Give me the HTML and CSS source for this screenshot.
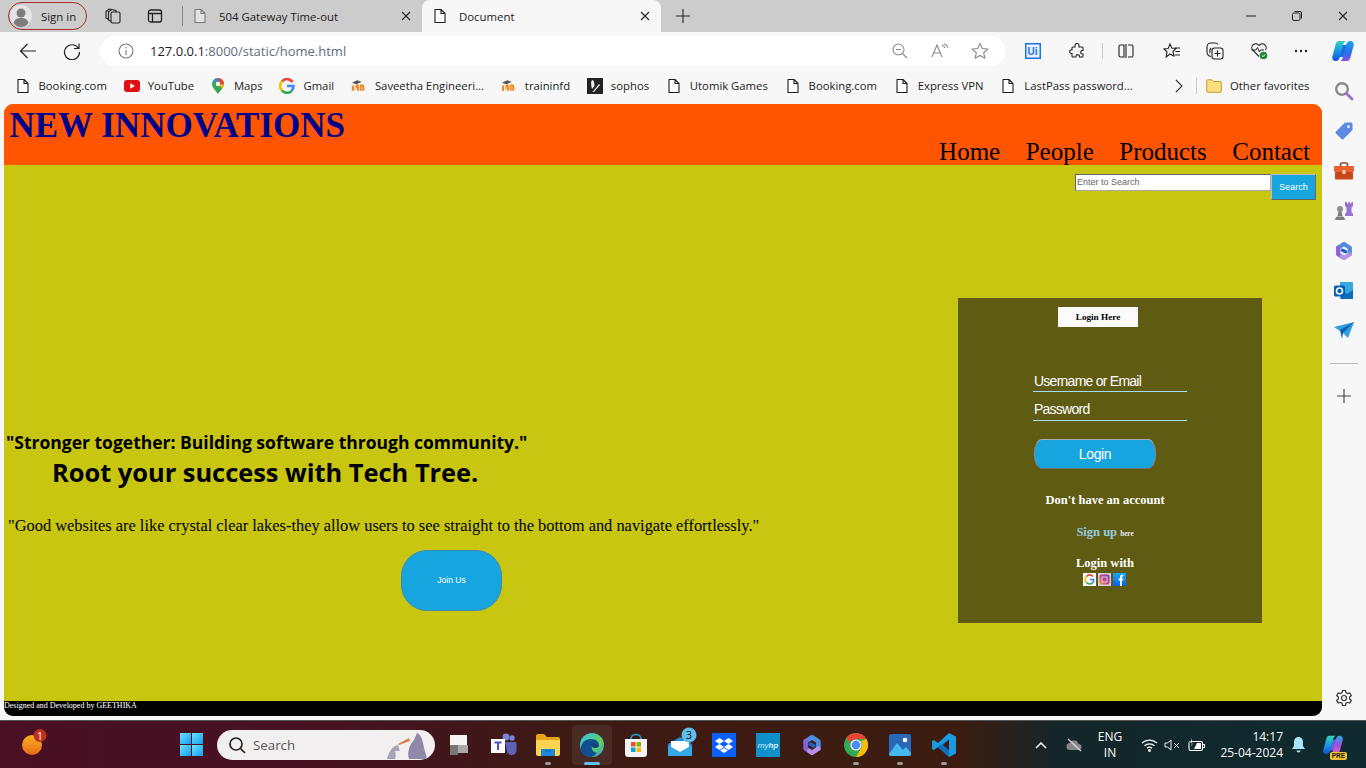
FILE: index.html

```html
<!DOCTYPE html>
<html lang="en">
<head>
    <meta charset="UTF-8" />
    <meta name="viewport" content="width=device-width, initial-scale=1" />
    <title>Document</title>
    <link rel="stylesheet" href="styles.css">
</head>
<body>
    <svg class="sprite" aria-hidden="true">
        <defs>
            <linearGradient id="gCopilot" x1="0" y1="0" x2="0" y2="1"><stop offset="0" stop-color="#2fd8b8"/><stop offset=".55" stop-color="#1a8fe8"/><stop offset="1" stop-color="#1450d8"/></linearGradient>
            <linearGradient id="gCopilot2" x1="0" y1="0" x2="0" y2="1"><stop offset="0" stop-color="#1aa0f0"/><stop offset=".6" stop-color="#2a70e8"/><stop offset="1" stop-color="#8a50e0"/></linearGradient>
            <linearGradient id="gCopilot3" x1="0" y1="0" x2="0" y2="1"><stop offset="0" stop-color="#2aa8f0"/><stop offset=".5" stop-color="#a050e0"/><stop offset="1" stop-color="#f060b0"/></linearGradient>
            <linearGradient id="gWin" x1="0" y1="0" x2="1" y2="1"><stop offset="0" stop-color="#6fe3ff"/><stop offset="1" stop-color="#0f9cf5"/></linearGradient>
            <linearGradient id="gSun" x1="0" y1="0" x2="0" y2="1"><stop offset="0" stop-color="#f5b21e"/><stop offset="1" stop-color="#ee6a1a"/></linearGradient>
            <linearGradient id="gEdge" x1="0" y1="0" x2="1" y2="1"><stop offset="0" stop-color="#35c1f1"/><stop offset=".6" stop-color="#5fd060"/><stop offset="1" stop-color="#2f9de0"/></linearGradient>
            <linearGradient id="gInsta" x1="0" y1="1" x2="1" y2="0"><stop offset="0" stop-color="#e8a040"/><stop offset=".5" stop-color="#c04090"/><stop offset="1" stop-color="#7040b0"/></linearGradient>
            <linearGradient id="gFb" x1="0" y1="0" x2="0" y2="1"><stop offset="0" stop-color="#18a8f8"/><stop offset="1" stop-color="#0a60e8"/></linearGradient>
        </defs>
        <symbol id="i-page" viewBox="0 0 16 16"><path d="M3 1.500h6l4 4v9H3zM9 1.500v4h4" fill="#fff" stroke="#1c1c1c" stroke-width="1.100" stroke-linejoin="round"/></symbol>
        <symbol id="i-close" viewBox="0 0 12 12"><path d="M2 2l8 8M10 2l-8 8" stroke="#222" stroke-width="1.100" fill="none"/></symbol>
        <symbol id="i-copilot" viewBox="0 0 24 24"><path d="M11 6h5l-3 12H8z" fill="#1a6fe0"/><path d="M8 2h7c-1.500.5-2.500 2-3 4L9 18c-.5 2-2 4-4 4-2.500 0-4.500-2-3.500-5L4.500 6C5.200 3.500 6 2 8 2z" fill="url(#gCopilot)"/><path d="M16 22H9c1.500-.5 2.500-2 3-4l3-12c.5-2 2-4 4-4 2.500 0 4.500 2 3.500 5l-3 11c-.7 2.500-1.500 4-3.500 4z" fill="url(#gCopilot2)"/></symbol>
        <symbol id="i-copilot-pre" viewBox="0 0 24 24"><path d="M11 6h5l-3 12H8z" fill="#5a60e0"/><path d="M8 2h7c-1.500.5-2.500 2-3 4L9 18c-.5 2-2 4-4 4-2.500 0-4.500-2-3.500-5L4.500 6C5.200 3.500 6 2 8 2z" fill="url(#gCopilot)"/><path d="M16 22H9c1.500-.5 2.500-2 3-4l3-12c.5-2 2-4 4-4 2.500 0 4.500 2 3.500 5l-3 11c-.7 2.500-1.500 4-3.500 4z" fill="url(#gCopilot3)"/></symbol>
        <symbol id="i-m365" viewBox="0 0 24 24"><g fill="none" stroke-width="5" stroke-linejoin="round" stroke-linecap="round"><path d="M5 8l7-4.500 7 4.500v8" stroke="#4f8ce0"/><path d="M5 8v8l4 2.500" stroke="#8a60d8"/><path d="M9 18.500l3 2 7-4.500" stroke="#b890e8"/><path d="M10 11l4 2" stroke="#1f5fc8" stroke-width="4"/></g></symbol>
        <symbol id="i-moodle" viewBox="0 0 18 14"><path d="M1 4l6-3 5 2-6 2.500z" fill="#555"/><path d="M1 13V7h2.500v6zM5 13V7.500C5 6 6 5.500 7 5.500S9 6 9 7.500V13H6.800V8H7zM9.800 13V7.500c0-1.500 1-2 2.200-2 1.500 0 3 .5 3 2.500v5h-2.400V8H12v5z" fill="#f08a24"/></symbol>
    </svg>

    <header class="tabstrip">
        <div class="signin">
            <svg width="22" height="22" viewBox="0 0 22 22"><circle cx="11" cy="11" r="11" fill="#e4e4e4"/><circle cx="11" cy="8" r="4.500" fill="#7d7d7d"/><path d="M3.500 18c1-4 4-5 7.500-5s6.500 1 7.500 5c-2 2.500-4.500 4-7.500 4s-5.500-1.500-7.500-4z" fill="#7d7d7d"/></svg>
            <span>Sign in</span>
        </div>
        <svg class="strip-workspaces" width="18" height="18" viewBox="0 0 18 18" fill="none" stroke="#222" stroke-width="1.100"><rect x="7" y="5" width="9" height="11" rx="1.500"/><path d="M7 14.500L4.500 13V4.500L8 2.500l4 1V5M4.500 12.500L2 11V4.500L5 2l3 .5"/></svg>
        <svg class="strip-tabs" width="16" height="16" viewBox="0 0 16 16" fill="none" stroke="#222" stroke-width="1.300"><rect x="1.500" y="2" width="13" height="12" rx="2"/><path d="M1.500 5.500h13M5.500 5.500V14"/></svg>
        <span class="strip-sep"></span>
        <div class="tab">
            <svg width="16" height="16" class="dim"><use href="#i-page"/></svg>
            <span class="tab-title">504 Gateway Time-out</span>
            <svg width="12" height="12"><use href="#i-close"/></svg>
        </div>
        <div class="tab tab-active">
            <svg width="16" height="16"><use href="#i-page"/></svg>
            <span class="tab-title">Document</span>
            <svg width="12" height="12"><use href="#i-close"/></svg>
        </div>
        <svg class="strip-plus" width="16" height="16" viewBox="0 0 16 16"><path d="M8 1v14M1 8h14" stroke="#222" stroke-width="1.100"/></svg>
        <div class="winctl">
            <svg width="12" height="12" viewBox="0 0 12 12"><path d="M1 6h10" stroke="#222"/></svg>
            <svg width="12" height="12" viewBox="0 0 12 12" fill="none" stroke="#222"><rect x="1.500" y="3" width="7.500" height="7.500" rx="1.500"/><path d="M3.500 1.500h5.500a1.500 1.500 0 0 1 1.500 1.500v5.500"/></svg>
            <svg width="12" height="12"><use href="#i-close"/></svg>
        </div>
    </header>

    <nav class="toolbar">
        <svg class="tool-back" width="18" height="18" viewBox="0 0 18 18" fill="none" stroke="#222" stroke-width="1.200"><path d="M17 9H1.500M8.500 2L1.500 9l7 7"/></svg>
        <svg class="tool-reload" width="18" height="18" viewBox="0 0 18 18" fill="none" stroke="#222" stroke-width="1.200"><path d="M15.500 6.500A7.500 7.500 0 1 0 16.500 10M16 1.500v5h-5"/></svg>
        <div class="address">
            <svg width="16" height="16" viewBox="0 0 16 16" fill="none" stroke="#777" stroke-width="1.100"><circle cx="8" cy="8" r="7"/><path d="M8 7v5M8 4v1.500"/></svg>
            <span class="url"><b>127.0.0.1</b>:8000/static/home.html</span>
            <svg class="addr-zoom" width="16" height="16" viewBox="0 0 16 16" fill="none" stroke="#8a8a8a" stroke-width="1.100"><circle cx="6.500" cy="6.500" r="5.500"/><path d="M10.500 10.500L15 15M4 6.500h5"/></svg>
            <svg class="addr-read" width="18" height="16" viewBox="0 0 18 16" fill="none" stroke="#8a8a8a" stroke-width="1.100"><path d="M1 14L6 2l5 12M3 10h6"/><path d="M11 2c1.500.5 2.500 1.500 3 3M13 .8c2 .7 3.500 2 4 4"/></svg>
            <svg class="addr-star" width="18" height="18" viewBox="0 0 18 18" fill="none" stroke="#8a8a8a" stroke-width="1.100"><path d="M9 1.500l2.300 5 5.400.6-4 3.700 1.100 5.400L9 13.500l-4.800 2.700 1.100-5.400-4-3.700 5.400-.6z"/></svg>
        </div>
        <svg class="tool-ui" width="16" height="16" viewBox="0 0 16 16"><rect width="16" height="16" fill="#1a73e8"/><rect x="1.500" y="1.500" width="13" height="13" fill="#e8f1fd"/><text x="2.500" y="12" class="ui-text">Ui</text></svg>
        <svg class="tool-ext" width="16" height="16" viewBox="0 0 16 16" fill="none" stroke="#222" stroke-width="1.100"><path d="M6 2.500a2 2 0 0 1 4 0V4h3c.6 0 1 .4 1 1v2.500h-1a1.800 1.800 0 0 0 0 3.500h1v2c0 .6-.4 1-1 1h-2.500v-1a1.800 1.800 0 0 0-3.500 0v1H4c-.6 0-1-.4-1-1v-2.500H2a1.800 1.800 0 0 1 0-3.500h1V5c0-.6.4-1 1-1h2z"/></svg>
        <span class="tool-sep"></span>
        <svg class="tool-split" width="16" height="14" viewBox="0 0 16 14" fill="none" stroke="#222" stroke-width="1.100"><path d="M6 1H2.500C1.600 1 1 1.600 1 2.500v9c0 .9.600 1.500 1.500 1.500H6zM8 0v14M10 1h3.500c.9 0 1.500.6 1.500 1.500v9c0 .9-.6 1.500-1.500 1.500H10"/></svg>
        <svg class="tool-favs" width="18" height="16" viewBox="0 0 18 16" fill="none" stroke="#222" stroke-width="1.100"><path d="M7 1l1.800 4 4.200.5-3 3 .8 4.500L7 11l-3.800 3 .8-5-3-3 4.200-.5z"/><path d="M12 5h5M12.500 8.500H17M11.500 12H17"/></svg>
        <svg class="tool-coll" width="18" height="18" viewBox="0 0 18 18" fill="none" stroke="#222" stroke-width="1.100"><path d="M5 14.500C2.500 14 1 12.500 1 10V5c0-2.500 1.500-4 4-4h4c1.500 0 2.500.6 3 1.500"/><rect x="6" y="6" width="11" height="11" rx="2.500"/><path d="M11.500 8.500v6M8.500 11.500h6M4 11c-.5-2 0-4 1-5"/></svg>
        <svg class="tool-health" width="18" height="18" viewBox="0 0 18 18"><path d="M9 14.500L2.500 8A3.800 3.800 0 0 1 9 3.500 3.800 3.800 0 0 1 15.500 8" fill="none" stroke="#222" stroke-width="1.100"/><path d="M1.500 8H6l1.500-2.500L9.500 10l1-2H14" fill="none" stroke="#222"/><circle cx="13.500" cy="13.500" r="3.800" fill="#1f8a3c"/><path d="M11.800 13.500l1.200 1.200 2-2.200" stroke="#fff" fill="none"/></svg>
        <svg class="tool-more" width="14" height="4" viewBox="0 0 14 4" fill="#222"><circle cx="2" cy="2" r="1.200"/><circle cx="7" cy="2" r="1.200"/><circle cx="12" cy="2" r="1.200"/></svg>
        <svg class="tool-copilot" width="24" height="24"><use href="#i-copilot"/></svg>
    </nav>

    <div class="workarea">
        <div class="workcol">
            <div class="bookmarks">
                <a class="bm"><svg width="16" height="16"><use href="#i-page"/></svg>Booking.com</a>
                <a class="bm"><svg width="16" height="12" viewBox="0 0 16 12"><rect width="16" height="12" rx="3" fill="#e01010"/><path d="M6.300 3.300v5.400L11 6z" fill="#fff"/></svg>YouTube</a>
                <a class="bm bm-maps"><svg width="14" height="18" viewBox="0 0 14 18"><path d="M7 1a6 6 0 0 1 6 6c0 3-3 6-6 10C4 13 1 10 1 7a6 6 0 0 1 6-6z" fill="#34a853"/><path d="M2 3.500A6 6 0 0 1 7 1v5z" fill="#4285f4"/><path d="M7 1a6 6 0 0 1 6 6H8z" fill="#ea4335"/><path d="M13 7c0 1.500-1 3-2 4.500L8 8z" fill="#fbbc04"/><circle cx="7" cy="7" r="2.200" fill="#fff"/></svg>Maps</a>
                <a class="bm"><svg width="16" height="16" viewBox="0 0 16 16" fill="none" stroke-width="2.600"><path d="M13.500 4A6.500 6.500 0 0 0 3 3.500" stroke="#ea4335"/><path d="M3.200 3.200a6.500 6.500 0 0 0 0 9.600" stroke="#fbbc04"/><path d="M3 12.500a6.500 6.500 0 0 0 9.500.6" stroke="#34a853"/><path d="M12.300 13.200A6.500 6.500 0 0 0 14.500 8H8" stroke="#4285f4"/></svg>Gmail</a>
                <a class="bm"><svg width="16" height="13"><use href="#i-moodle"/></svg>Saveetha Engineeri...</a>
                <a class="bm"><svg width="16" height="13"><use href="#i-moodle"/></svg>traininfd</a>
                <a class="bm"><svg width="16" height="16" viewBox="0 0 16 16"><rect width="16" height="16" fill="#222"/><path d="M5 2c2 0 2.500 3 2.500 6L5 11C4 7 3.500 4 5 2zM12 6l1 1-6 7H5.500z" fill="#eee"/></svg>sophos</a>
                <a class="bm"><svg width="16" height="16"><use href="#i-page"/></svg>Utomik Games</a>
                <a class="bm"><svg width="16" height="16"><use href="#i-page"/></svg>Booking.com</a>
                <a class="bm"><svg width="16" height="16"><use href="#i-page"/></svg>Express VPN</a>
                <a class="bm"><svg width="16" height="16"><use href="#i-page"/></svg>LastPass password...</a>
                <svg class="bm-more" width="8" height="14" viewBox="0 0 8 14"><path d="M1 1l6 6-6 6" fill="none" stroke="#333" stroke-width="1.100"/></svg>
                <span class="bm-sep"></span>
                <a class="bm bm-other"><svg width="16" height="14" viewBox="0 0 16 14"><path d="M.7 2c0-.7.5-1.200 1.200-1.200h4l1.600 1.700h6.600c.7 0 1.200.5 1.200 1.200v8.400c0 .7-.5 1.200-1.200 1.200H1.900c-.7 0-1.200-.5-1.200-1.200z" fill="#fbdd82" stroke="#c89a2a"/></svg>Other favorites</a>
            </div>

            <div class="page">
                <div class="page-head">
                    <h1>NEW INNOVATIONS</h1>
                    <ul class="menu">
                        <li>Home</li>
                        <li>People</li>
                        <li>Products</li>
                        <li>Contact</li>
                    </ul>
                </div>
                <div class="page-body">
                    <form class="searchbar">
                        <input type="text" placeholder="Enter to Search" />
                        <button type="button">Search</button>
                    </form>
                    <div class="main-row">
                        <section class="hero">
                            <p class="tag1">"Stronger together: Building software through community."</p>
                            <p class="tag2">Root your success with Tech Tree.</p>
                            <p class="quote">"Good websites are like crystal clear lakes-they allow users to see straight to the bottom and navigate effortlessly."</p>
                            <button type="button" class="join">Join Us</button>
                        </section>
                        <section class="login">
                            <div class="login-title">Login Here</div>
                            <input class="login-input login-user" type="text" placeholder="Username or Email" />
                            <input class="login-input login-pass" type="password" placeholder="Password" />
                            <button type="button" class="login-btn">Login</button>
                            <p class="login-note">Don't have an account</p>
                            <p class="login-signup"><a>Sign up</a> <small>here</small></p>
                            <p class="login-with">Login with</p>
                            <div class="socials">
                                <svg width="13" height="13" viewBox="0 0 13 13"><rect width="13" height="13" fill="#fff"/><g fill="none" stroke-width="1.700"><path d="M10 3.500A4.200 4.200 0 0 0 3.500 3.500" stroke="#ea4335"/><path d="M3.600 3.300a4.200 4.200 0 0 0 0 6.400" stroke="#fbbc04"/><path d="M3.500 9.500a4.200 4.200 0 0 0 6 .3" stroke="#34a853"/><path d="M9.400 9.900a4.200 4.200 0 0 0 1.300-3.400H6.700" stroke="#4285f4"/></g></svg>
                                <svg width="13" height="13" viewBox="0 0 13 13"><rect width="13" height="13" fill="#d8c8d8"/><rect x="1.500" y="1.500" width="10" height="10" rx="2" fill="url(#gInsta)"/><rect x="4" y="4" width="5" height="5" fill="none" stroke="#e8c8e0"/></svg>
                                <svg width="13" height="13" viewBox="0 0 13 13"><rect width="13" height="13" fill="url(#gFb)"/><path d="M7 13V7.500H5.500V5.500H7V4c0-1.500 1-2.300 2.200-2.300h1.100v1.800H9.500c-.5 0-.7.300-.7.800v1.200h1.500l-.3 2H8.800V13z" fill="#fff"/></svg>
                            </div>
                        </section>
                    </div>
                </div>
                <div class="page-foot">Designed and Developed by GEETHIKA</div>
            </div>
        </div>

        <aside class="sidebar">
            <svg width="20" height="20" viewBox="0 0 20 20" fill="none"><circle cx="8" cy="8" r="5.800" stroke="#8a8a8a" stroke-width="2.400"/><path d="M12.500 12.500l5.500 5.500" stroke="#9a6fd0" stroke-width="2.800" stroke-linecap="round"/></svg>
            <svg width="20" height="20" viewBox="0 0 20 20"><path d="M11 1.500h6c.8 0 1.500.7 1.500 1.500v6L9.500 18c-.6.600-1.500.6-2.100 0L2 12.600c-.6-.6-.6-1.500 0-2.100z" fill="#5b8ae0"/><circle cx="14.500" cy="5.500" r="1.500" fill="#e8eefc"/></svg>
            <svg width="20" height="20" viewBox="0 0 20 18"><path d="M6.500 5V2.500C6.500 1.700 7 1 8 1h4c1 0 1.500.7 1.500 1.500V5" fill="none" stroke="#8a4a30" stroke-width="1.600"/><rect y="4" width="20" height="6" rx="1" fill="#e8602c"/><rect x="1" y="10" width="18" height="7.500" rx="1" fill="#c8481c"/><rect x="8.500" y="8" width="3" height="4" fill="#f5d0c0"/></svg>
            <svg width="20" height="20" viewBox="0 0 20 20"><circle cx="6" cy="8" r="3" fill="#8f8f8f"/><path d="M4.500 10.500h3l1 4.500h-5zM1 19c0-2 1-3 2-3.500h6c1 .5 2 1.500 2 3.500z" fill="#7c7c7c"/><path d="M11.500 1h1.500v1.500h1.500V1H16v1.500h1.500V1H19v4l-1.500 1.500V11L19 13v2h-8v-2l1.500-2V6.500L11 5V1z" fill="#9a70d0"/></svg>
            <svg width="20" height="20"><use href="#i-m365"/></svg>
            <svg width="20" height="20" viewBox="0 0 20 20"><path d="M6 1h12c.6 0 1 .4 1 1v15c0 .6-.4 1-1 1H6z" fill="#35a8e0"/><path d="M7 9l6 4 6-4v9H7z" fill="#0f6cbd"/><rect y="4.500" width="11" height="11" rx="1.500" fill="#0a5fb0"/><circle cx="5.500" cy="10" r="3" fill="none" stroke="#fff" stroke-width="1.600"/></svg>
            <svg width="20" height="20" viewBox="0 0 20 18"><path d="M0 5l20-5-6 16-5-5z" fill="#2f9fe0"/><path d="M6 8l14-8L9 11l-1 6z" fill="#0f62b0"/></svg>
            <span class="side-sep"></span>
            <svg class="side-plus" width="14" height="14" viewBox="0 0 14 14"><path d="M7 0v14M0 7h14" stroke="#444" stroke-width="1.100"/></svg>
            <svg class="side-gear" width="18" height="18" viewBox="0 0 18 18" fill="none" stroke="#333" stroke-width="1.200"><circle cx="9" cy="9" r="2.500"/><path d="M7.500 1.500h3l.5 2.200 1.600.9 2.200-.7 1.500 2.600-1.700 1.500v1.900l1.700 1.500-1.500 2.600-2.200-.7-1.600.9-.5 2.300h-3L7 14.200l-1.600-.9-2.200.7-1.500-2.600 1.700-1.500V8L1.700 6.500l1.500-2.600 2.200.7L7 3.700z"/></svg>
        </aside>
    </div>

    <footer class="taskbar">
        <div class="weather">
            <svg width="32" height="32" viewBox="0 0 32 32"><circle cx="12" cy="16" r="10" fill="url(#gSun)"/><circle cx="20" cy="6.500" r="6.500" fill="#c0301f"/><text x="20" y="10.500" class="badge-text">1</text></svg>
        </div>
        <svg class="start" width="23" height="23" viewBox="0 0 23 23" fill="url(#gWin)"><rect width="11" height="11"/><rect x="12" width="11" height="11"/><rect y="12" width="11" height="11"/><rect x="12" y="12" width="11" height="11"/></svg>
        <div class="task-search">
            <svg width="18" height="18" viewBox="0 0 18 18" fill="none" stroke="#222" stroke-width="1.700"><circle cx="8" cy="8" r="6"/><path d="M12.500 12.500L17 17"/></svg>
            <span>Search</span>
            <svg class="penguins" width="40" height="28" viewBox="0 0 40 28"><path d="M22 28c-2-6 0-14 5-19l3-7c3 1 5 5 6 10 1 6 3 11 4 16z" fill="#8f88a8"/><path d="M22 7l-11 6 1 1 11-4z" fill="#e07a40"/><path d="M0 28c1-5 4-11 8-13l3-1c2 4 2 9 1 14z" fill="#a8a4b8"/><path d="M8 20c1 3 1 6 0 8h5c1-3 1-6 0-8z" fill="#eeeef2"/></svg>
        </div>
        <div class="task-apps">
            <div class="app"><svg width="24" height="24" viewBox="0 0 24 24"><rect x="2" y="2" width="17" height="17" fill="#f4f4f4"/><rect x="2" y="12" width="8" height="10" fill="#777"/><rect x="10" y="12" width="10" height="8" fill="#aaa"/></svg></div>
            <div class="app"><svg width="26" height="24" viewBox="0 0 26 24"><circle cx="21" cy="5" r="2.700" fill="#7b83d8"/><circle cx="15" cy="4" r="3.400" fill="#7b83d8"/><path d="M14 9h10c1 0 1.500.5 1.500 1.500V17c0 3-2 5-4.500 5s-4-1-5-3z" fill="#5b62b8"/><rect y="6" width="14" height="14" fill="#fff"/><path d="M3.500 9.500h7M7 9.500v7.500" stroke="#4b53bc" stroke-width="2"/></svg></div>
            <div class="app app-on"><svg width="24" height="22" viewBox="0 0 24 22"><path d="M0 2c0-1 .7-2 2-2h6l3 3h11c1 0 2 .7 2 2v3H0z" fill="#e5a21a"/><path d="M0 6h24v14c0 1-.7 2-2 2H2c-1 0-2-1-2-2z" fill="#fcd450"/><path d="M5 15h14v7H5z" fill="#1b88d8"/><path d="M9 17h6" stroke="#0d5fa8"/></svg><span class="dot"></span></div>
            <div class="app app-active"><svg width="24" height="24" viewBox="0 0 24 24"><circle cx="12" cy="12" r="12" fill="url(#gEdge)"/><path d="M1 14C2 8 7 6 11 6c5 0 8 3 8 6 0 2-2 3-4 3s-3-1-3-2c-1 3 1 6 5 7-2 2-4 4-7 4C4 24 0 19 1 14z" fill="#0f4f90"/><path d="M11 11c4-1 7 0 8 2-1 1.500-3 2-4 2s-3-1-4-4z" fill="#14335f" opacity=".5"/></svg><span class="bar"></span></div>
            <div class="app"><svg width="24" height="24" viewBox="0 0 24 24"><path d="M7 6c0-6 10-6 10 0" fill="none" stroke="#18a0d8" stroke-width="1.600"/><path d="M1 6h22v15c0 1.500-1 3-3 3H4c-2 0-3-1.500-3-3z" fill="#f4f4f4"/><rect x="7" y="9" width="4.500" height="4.500" fill="#f25022"/><rect x="12.500" y="9" width="4.500" height="4.500" fill="#7fba00"/><rect x="7" y="14.500" width="4.500" height="4.500" fill="#00a4ef"/><rect x="12.500" y="14.500" width="4.500" height="4.500" fill="#ffb900"/></svg></div>
            <div class="app"><svg width="34" height="36" viewBox="0 0 34 36"><path d="M5 17l12-7 12 7v12H5z" fill="#1f8fd8"/><path d="M8 14h18v8l-9 4-9-4z" fill="#fff"/><path d="M5 18l12 7 12-7v11H5z" fill="#35a8e8"/><circle cx="26" cy="8" r="7.500" fill="#5fc0f0"/><text x="26" y="12" class="mail-text">3</text></svg></div>
            <div class="app"><svg width="24" height="24" viewBox="0 0 24 24"><rect width="24" height="24" fill="#0a60ff"/><path d="M7.500 5l4.500 3-4.500 3L3 8zM16.500 5L21 8l-4.500 3L12 8zM7.500 11l4.500 3-4.500 3L3 14zM16.500 11l4.500 3-4.500 3L12 14zM12 15l4 2.500-4 2.500-4-2.500z" fill="#fff"/></svg></div>
            <div class="app"><svg width="24" height="24" viewBox="0 0 24 24"><rect width="24" height="24" fill="#1090c8"/><text x="12" y="15" class="hp-text">my<tspan>hp</tspan></text></svg></div>
            <div class="app"><svg width="22" height="22"><use href="#i-m365"/></svg></div>
            <div class="app app-on"><svg width="24" height="24" viewBox="0 0 24 24"><circle cx="12" cy="12" r="12" fill="#34a853"/><path d="M12 0a12 12 0 0 1 10.400 6H12a6 6 0 0 0-5.400 3.400L2.300 5A12 12 0 0 1 12 0z" fill="#ea4335"/><path d="M22.400 6A12 12 0 0 1 12 24l5.200-9A6 6 0 0 0 17 8z" fill="#fbbc04"/><circle cx="12" cy="12" r="5.600" fill="#fff"/><circle cx="12" cy="12" r="4.400" fill="#4a8cf0"/></svg><span class="dot"></span></div>
            <div class="app app-on"><svg width="22" height="22" viewBox="0 0 22 22"><rect width="22" height="22" rx="2" fill="#2868b8"/><path d="M0 20l8-11 6 7 3-3 5 6v1c0 1-1 2-2 2H2c-1 0-2-1-2-2z" fill="#48b8f0"/><circle cx="16" cy="6" r="2.300" fill="#fff"/></svg><span class="dot"></span></div>
            <div class="app app-on"><svg width="24" height="24" viewBox="0 0 24 24"><path d="M17 0l7 3.500v17L17 24 6 14l-4 3-2-1V8l2-1 4 3z" fill="#1a9ae0"/><path d="M17 0v24L6 14 17 6.500V17l-6-5 6-5z" fill="#0d6fb8"/><path d="M17 6.500L11 12l6 5z" fill="#3a1c14"/></svg><span class="dot"></span></div>
        </div>
        <div class="tray">
            <svg class="tray-up" width="12" height="8" viewBox="0 0 12 8"><path d="M1 7l5-5 5 5" fill="none" stroke="#fff" stroke-width="1.500"/></svg>
            <svg class="tray-cloud" width="16" height="14" viewBox="0 0 16 14"><path d="M4 12a3.500 3.500 0 0 1 0-7 4.500 4.500 0 0 1 8.500 1 3 3 0 0 1 0 6z" fill="#888"/><path d="M2 1l13 12" stroke="#ddd" stroke-width="1.200"/></svg>
            <div class="tray-lang">ENG<br>IN</div>
            <svg class="tray-wifi" width="17" height="14" viewBox="0 0 17 14" fill="none" stroke="#fff" stroke-width="1.200"><path d="M1 5a11 11 0 0 1 15 0M3.500 7.800a7.500 7.500 0 0 1 10 0M6 10.300a3.800 3.800 0 0 1 5 0"/><circle cx="8.500" cy="12.500" r=".8" fill="#fff"/></svg>
            <svg class="tray-vol" width="16" height="12" viewBox="0 0 16 12" fill="none" stroke="#eee" stroke-width="1"><path d="M1 4v4h2.500L7 11V1L3.500 4zM10 4l5 5M15 4l-5 5"/></svg>
            <svg class="tray-bat" width="17" height="14" viewBox="0 0 17 14" fill="none" stroke="#fff" stroke-width="1.100"><rect x="1" y="3.500" width="13.500" height="9" rx="1.500"/><path d="M15 6.500h1.500v3H15"/><path d="M9 5h4v6H6z" fill="#fff" stroke="none"/><path d="M4 0L1.500 5H5l-1.500 4" fill="#fff" stroke="#0f2a2e" stroke-width=".6"/></svg>
            <div class="tray-clock">14:17<br>25-04-2024</div>
            <svg class="tray-bell" width="15" height="16" viewBox="0 0 15 16" fill="#a8e4f8"><path d="M7.500 0C4.500 0 3 2.500 3 5v4l-2 3h13l-2-3V5c0-2.500-1.500-5-4.500-5zM5.500 13.500h4a2 2 0 0 1-4 0z"/></svg>
            <div class="tray-pre">
                <svg width="24" height="22"><use href="#i-copilot-pre"/></svg>
                <span>PRE</span>
            </div>
        </div>
    </footer>
</body>
</html>
```

FILE: styles.css

```css
* {
    box-sizing: border-box;
}
html, body {
    margin: 0;
    height: 768px;
    overflow: hidden;
}
body {
    display: flex;
    flex-direction: column;
    width: 1366px;
    background-color: #f7f7f7;
    font-family: "Open Sans", "Noto Sans", sans-serif;
    color: #1c1c1c;
}
svg {
    flex: none;
    display: block;
}
.sprite {
    width: 0;
    height: 0;
    overflow: hidden;
}

/* tab strip */
.tabstrip {
    display: flex;
    align-items: center;
    height: 32px;
    flex: none;
    background-color: #cccccc;
    padding-left: 8px;
    font-size: 11.400px;
}
.signin {
    display: flex;
    align-items: center;
    gap: 9px;
    width: 79px;
    height: 28px;
    padding-left: 1px;
    border: 1px solid #a82a2a;
    border-radius: 14px;
}
.strip-workspaces {
    margin-left: 17px;
}
.strip-tabs {
    margin-left: 25px;
}
.strip-sep {
    width: 1px;
    height: 20px;
    background-color: #8a8a8a;
    margin: 0 9px 0 19px;
}
.tab {
    display: flex;
    align-items: center;
    width: 230px;
    height: 32px;
    padding: 0 10px 0 0;
}
.tab .dim {
    opacity: .45;
}
.tab-title {
    flex: 1;
    margin-left: 11px;
    white-space: nowrap;
}
.tab-active {
    width: 239px;
    padding: 0 10px;
    background-color: #f7f7f7;
    border-radius: 8px 8px 0 0;
}
.strip-plus {
    margin-left: 14px;
}
.winctl {
    display: flex;
    gap: 34px;
    margin-left: auto;
    padding-right: 17px;
}

/* toolbar */
.toolbar {
    display: flex;
    align-items: center;
    height: 38px;
    flex: none;
    padding-left: 19px;
    background-color: #f7f7f7;
}
.tool-reload {
    margin-left: 26px;
}
.address {
    display: flex;
    align-items: center;
    width: 905px;
    height: 30px;
    margin-left: 19px;
    padding-left: 18px;
    background-color: #fff;
    border-radius: 15px;
    font-size: 13px;
}
.url {
    margin-left: 16px;
    color: #5f6b7a;
    white-space: nowrap;
}
.url b {
    font-weight: 400;
    color: #1c1c1c;
}
.addr-zoom {
    margin-left: auto;
}
.addr-read {
    margin-left: 23px;
}
.addr-star {
    margin: 0 16px 0 22px;
}
.tool-ui {
    margin-left: 20px;
}
.ui-text {
    font: 700 10px "Liberation Sans", sans-serif;
    fill: #1a73e8;
}
.tool-ext {
    margin-left: 28px;
}
.tool-sep {
    width: 1px;
    height: 16px;
    background-color: #ccc;
    margin-left: 17px;
}
.tool-split {
    margin-left: 15px;
}
.tool-favs {
    margin-left: 29px;
}
.tool-coll {
    margin-left: 25px;
}
.tool-health {
    margin-left: 26px;
}
.tool-more {
    margin-left: 26px;
}
.tool-copilot {
    margin-left: 23px;
}

/* work area */
.workarea {
    display: flex;
    flex: 1;
    min-height: 0;
}
.workcol {
    display: flex;
    flex-direction: column;
    width: 1322px;
}
.bookmarks {
    display: flex;
    align-items: center;
    gap: 16.800px;
    height: 30px;
    flex: none;
    padding: 1px 0 0 14.500px;
    font-size: 11.300px;
    white-space: nowrap;
}
.bm {
    display: flex;
    align-items: center;
    gap: 8px;
}
.bm-maps svg {
    margin-right: 1px;
}
.bm-more {
    margin-left: 26px;
}
.bm-sep {
    width: 1px;
    height: 16px;
    background-color: #ccc;
    margin-left: -4px;
}
.bm-other {
    margin-left: -8px;
}

/* the page itself */
.page {
    display: flex;
    flex-direction: column;
    height: 612px;
    margin: 4px 0 0 4px;
    border-radius: 9px;
    overflow: hidden;
    background-color: #c8c611;
}
.page-head {
    display: flex;
    justify-content: space-between;
    align-items: flex-end;
    height: 61px;
    flex: none;
    padding: 0 12px 0 5.500px;
    background-color: #ff5500;
}
h1 {
    align-self: flex-start;
    margin: 0;
    font: 700 35px/43px "Liberation Serif", serif;
    color: #00008b;
}
.menu {
    display: flex;
    gap: 25.500px;
    margin: 0;
    padding: 0;
    list-style: none;
    font: 25px/26px "Liberation Serif", serif;
    color: #000;
}
.page-body {
    flex: 1;
}
.searchbar {
    display: flex;
    justify-content: flex-end;
    align-items: flex-start;
    padding: 9px 6px 0 0;
}
.searchbar input {
    width: 196px;
    height: 17px;
    padding: 0 1px 1px;
    border: 1px solid #aaa;
    border-top-color: #666;
    border-left-color: #666;
    font: 9px "Liberation Sans", sans-serif;
}
.searchbar input::placeholder {
    color: #666;
}
.searchbar button {
    width: 45px;
    height: 26px;
    padding: 0;
    border: 1px solid;
    border-color: #bbb #666 #666 #bbb;
    background-color: #17a5e0;
    color: #fff;
    font: 9px "Liberation Sans", sans-serif;
}
.main-row {
    display: flex;
    justify-content: space-between;
}
.hero {
    flex: none;
    width: 760px;
    padding: 230px 0 0 2px;
}
.hero p {
    margin: 0;
    white-space: nowrap;
    color: #000;
}
.hero .tag1 {
    font: 700 17.500px/24px "Open Sans", sans-serif;
}
.hero .tag2 {
    padding-left: 46px;
    font: 700 25.400px/36px "Open Sans", sans-serif;
}
.hero .quote {
    padding-left: 2px;
    margin-top: 26px;
    font: 16.400px/20px "Liberation Serif", serif;
}
.join {
    display: block;
    width: 101px;
    height: 61px;
    margin: 14px 0 0 395px;
    padding: 0 0 2px;
    border: 1px solid #3b8cb0;
    border-radius: 26px;
    background-color: #17a5e0;
    color: #fff;
    font: 8.500px "Liberation Sans", sans-serif;
}
.login {
    display: flex;
    flex-direction: column;
    align-items: flex-start;
    width: 304px;
    height: 325px;
    margin: 98px 60px 0 0;
    padding: 9px 0 0 75px;
    background-color: #605b12;
    color: #fff;
    font-family: "Liberation Serif", serif;
}
.login-title {
    width: 80px;
    height: 20px;
    margin-left: 25px;
    background-color: #fbfbfb;
    color: #000;
    font: 700 9.200px/20px "Liberation Serif", serif;
    text-align: center;
}
.login-input {
    width: 154px;
    padding: 0 1px;
    background: transparent;
    border: none;
    border-bottom: 1px solid #a8dcf0;
    color: #fff;
    font: 14px "Liberation Sans", sans-serif;
    letter-spacing: -.75px;
    outline: none;
}
.login-user {
    height: 21px;
    margin-top: 44px;
}
.login-pass {
    height: 22px;
    margin-top: 7px;
    padding-bottom: 2px;
}
.login-input::placeholder {
    color: #fff;
    opacity: 1;
}
.login-btn {
    width: 122px;
    height: 30px;
    margin: 18px 0 0 1px;
    padding: 0;
    border: 1px solid;
    border-color: #a8a8a8 #888 #707070;
    border-radius: 8px / 14px;
    background-color: #17a5e0;
    color: #fff;
    font: 14px "Liberation Sans", sans-serif;
    letter-spacing: -.4px;
}
.login p {
    width: 144px;
    margin: 0;
    font-weight: 700;
    font-size: 12.500px;
    line-height: 16px;
    text-align: center;
}
.login .login-note {
    margin-top: 23px;
}
.login .login-signup {
    margin-top: 16px;
    color: #93cce0;
}
.login-signup small {
    font-size: 7.200px;
    color: #e8e8e8;
}
.login .login-with {
    margin-top: 13px;
}
.socials {
    display: flex;
    gap: 2px;
    margin: 2px 0 0 50px;
}
.page-foot {
    height: 15px;
    flex: none;
    background-color: #000;
    color: #fff;
    font: 8px/9px "Liberation Serif", serif;
}

/* right side panel */
.sidebar {
    display: flex;
    flex-direction: column;
    align-items: center;
    width: 44px;
    padding-top: 11px;
    gap: 20px;
}
.side-sep {
    width: 28px;
    height: 1px;
    margin-top: 2px;
    background-color: #bbb;
}
.side-plus {
    margin-top: 5px;
}
.side-gear {
    margin-top: auto;
    margin-bottom: 13px;
}

/* taskbar */
.taskbar {
    display: flex;
    align-items: center;
    height: 48px;
    flex: none;
    border-top: 1px solid #555;
    background: linear-gradient(90deg, #4a1024 0, #451222 340px, #3d1a14 560px, #3c1c10 960px, #14262a 1060px, #0f2b30 1366px);
    color: #fff;
}
.weather {
    margin-left: 20px;
}
.start {
    margin-left: 128px;
}
.task-search {
    display: flex;
    align-items: center;
    width: 218px;
    height: 30px;
    margin-left: 14px;
    padding-left: 11px;
    border-radius: 15px;
    background-color: #f1efef;
    color: #555;
    font-size: 13.300px;
}
.task-search span {
    margin-left: 7px;
}
.penguins {
    margin-left: auto;
    margin-right: 8px;
}
.task-apps {
    display: flex;
    margin-left: 3px;
}
.app {
    position: relative;
    display: flex;
    align-items: center;
    justify-content: center;
    width: 44px;
    height: 40px;
}
.app-active {
    width: 40px;
    margin: 0 2px;
    background-color: rgba(255, 255, 255, .07);
    border-radius: 4px;
}
.dot, .bar {
    position: absolute;
    bottom: 0;
    left: 50%;
    height: 3px;
    border-radius: 2px;
    transform: translateX(-50%);
}
.dot {
    width: 6px;
    background-color: #9a9a9a;
}
.bar {
    width: 16px;
    background-color: #5cc0ef;
}
.mail-text, .badge-text {
    font: 11px "Open Sans", sans-serif;
    text-anchor: middle;
}
.mail-text {
    fill: #111;
}
.badge-text {
    fill: #fff;
}
.hp-text {
    font: italic 8px "Liberation Sans", sans-serif;
    fill: #d8eef8;
    text-anchor: middle;
}
.hp-text tspan {
    font-weight: 700;
}
.tray {
    display: flex;
    align-items: center;
    flex: 1;
    margin-left: 69px;
    font-size: 12px;
    line-height: 16px;
}
.tray-cloud {
    margin-left: 19px;
}
.tray-lang {
    width: 36px;
    margin-left: 10px;
    text-align: center;
}
.tray-wifi {
    margin-left: 13px;
}
.tray-vol {
    margin-left: 6px;
}
.tray-bat {
    margin-left: 8px;
}
.tray-clock {
    width: 78px;
    text-align: right;
}
.tray-bell {
    margin-left: 8px;
}
.tray-pre {
    position: relative;
    margin-left: 15px;
}
.tray-pre span {
    position: absolute;
    right: -2px;
    bottom: -4px;
    padding: 0 2px;
    border-radius: 2px;
    background-color: #f4c430;
    color: #111;
    font: 700 6.500px/8px "Liberation Sans", sans-serif;
}
```
